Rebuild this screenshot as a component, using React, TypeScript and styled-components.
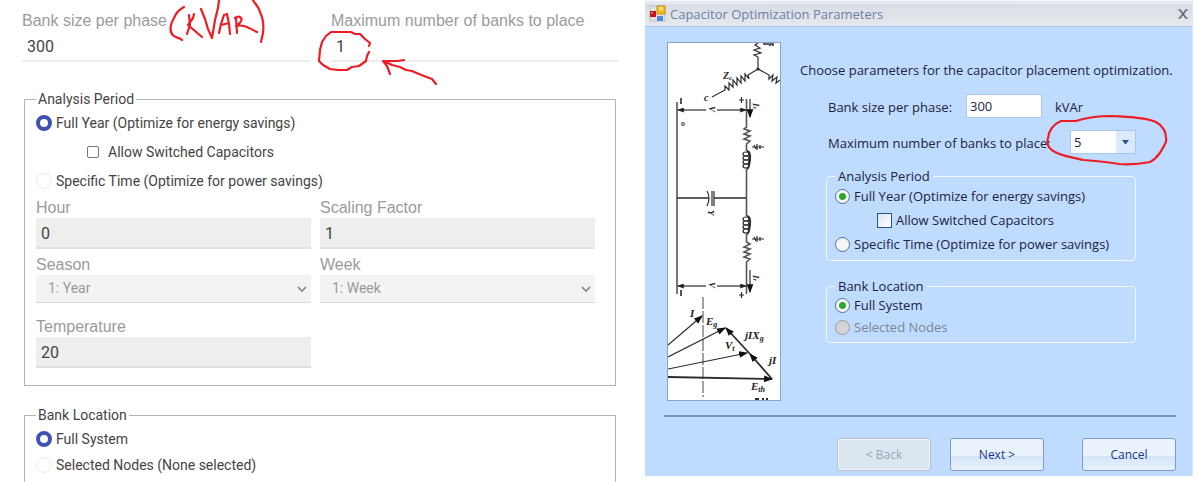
import React, { useId } from "react";
import styled, { createGlobalStyle } from "styled-components";

const GlobalStyle = createGlobalStyle`
  *, *::before, *::after { box-sizing: border-box; }
  body { margin: 0; background: #fff; }
  input, select, button { font: inherit; color: inherit; margin: 0; }
`;

const Page = styled.main`
  display: grid;
  grid-template-columns: minmax(0, 597fr) minmax(0, 548fr);
  align-items: start;
  gap: 26px;
  padding: 0 5px 0 22px;
  height: 100vh;
  overflow: hidden;
`;

/* ---------- web form ---------- */

const WebForm = styled.form`
  padding-top: 11px;
  font: 14px/20px Roboto, "Liberation Sans", sans-serif;
  color: #444;
`;

const TopFields = styled.div`
  display: grid;
  grid-template-columns: 1fr 1fr;
  gap: 21px;
  margin-bottom: 27px;
`;

const FieldGrid = styled.div`
  display: grid;
  grid-template-columns: 1fr 1fr;
  column-gap: 9px;
  row-gap: 6px;
  margin-top: 4px;
`;

const Field = styled.div<{ $spaced?: boolean }>`
  position: relative;
  display: flex;
  flex-direction: column;
  margin-top: ${(p) => (p.$spaced ? 8 : 0)}px;
`;

const FieldLabel = styled.label`
  font: 16px/20px "Liberation Sans", Arial, sans-serif;
  color: #9b9b9b;
`;

const TextInput = styled.input`
  width: 100%;
  height: 31px;
  padding: 2px 5px 0;
  border: 0;
  border-bottom: 2px solid #eee;
  border-radius: 0;
  background: transparent;
  font-size: 16px;
  color: #444;

  &:disabled {
    border-bottom-color: #e0e0e0;
    background: #eee;
  }
`;

const SelectBox = styled.div`
  display: grid;
  align-items: center;
  height: 28px;
  border-bottom: 1px solid #dcdcdc;
  background: #f3f3f3;

  & > * { grid-area: 1 / 1; }
  & > svg { justify-self: end; margin-right: 4px; pointer-events: none; }
`;

const FlatSelect = styled.select`
  appearance: none;
  width: 100%;
  height: 26px;
  padding: 0 12px 2px;
  border: 0;
  background: transparent;
  color: #999;
  opacity: 1;
`;

const Group = styled.fieldset`
  min-width: 0;
  margin: 0 3px 19px 2px;
  padding: 1px 20px 17px 11px;
  border: 1px solid #b4b4b4;

  & > legend { padding: 0 2px; }
`;

const Choice = styled.label<{ $nested?: boolean }>`
  display: flex;
  align-items: center;
  gap: ${(p) => (p.$nested ? 9 : 4)}px;
  height: ${(p) => (p.$nested ? 32 : 26)}px;
  padding-left: ${(p) => (p.$nested ? 51 : 0)}px;
`;

const WebRadio = styled.input.attrs({ type: "radio" })`
  appearance: none;
  width: 16px;
  height: 16px;
  border: 1px solid #ececec;
  border-radius: 50%;
  background: #fff;

  &:checked { border: 4px solid #3f51b5; }
`;

const WebCheck = styled.input.attrs({ type: "checkbox" })`
  appearance: none;
  width: 12px;
  height: 12px;
  border: 1px solid #777;
  border-radius: 2px;
  background: #fff;
`;

/* ---------- desktop dialog ---------- */

const Dialog = styled.section`
  padding-bottom: 5px;
  border-right: 1px solid #d6e9ff;
  background: #bfdbff;
  font: 13px/16px "Open Sans", "Noto Sans", sans-serif;
  color: #1c2340;
`;

const TitleBar = styled.header`
  display: flex;
  align-items: center;
  gap: 4px;
  height: 27px;
  padding: 0 3px 0 4px;
  border-top: 1px solid #f4fafa;
  border-bottom: 1px solid #a9c6ee;
  background: linear-gradient(#e4ebee 0 3px, #d8dde6 3px, #e6e9ec);
`;

const Title = styled.h1`
  flex: 1;
  margin: 0;
  font-size: 13px;
  font-weight: 400;
  color: #6b82a6;
`;

const CloseButton = styled.button`
  display: flex;
  padding: 0;
  border: 0;
  background: transparent;
`;

const DialogBody = styled.div`
  display: grid;
  grid-template-columns: 114px minmax(0, 1fr);
  gap: 19px;
  padding: 15px 16px 14px 22px;
`;

const Picture = styled.div`
  display: flex;
  border: 1px solid #86a3cc;
  background: #fff;
`;

const Parameters = styled.div`
  padding-top: 18px;
`;

const Intro = styled.p`
  margin: 0 0 14px;
  line-height: 20px;
  white-space: nowrap;
`;

const Row = styled.div`
  display: flex;
  align-items: center;
  height: 24px;
  margin-bottom: 12px;
  padding-left: 28px;
`;

const RowText = styled.span`
  padding-top: 2px;
`;

const RowLabel = styled.label<{ $width: number }>`
  width: ${(p) => p.$width}px;
  padding-top: 2px;
  white-space: nowrap;
`;

const SizeInput = styled.input`
  width: 76px;
  height: 24px;
  margin-right: 13px;
  padding: 0 3px;
  border: 1px solid #a9c7ec;
  background: #fff;
`;

const ComboBox = styled.div`
  position: relative;
  display: grid;
  align-items: center;
  width: 66px;
  height: 24px;
  border: 1px solid #a9c7ec;
  background: linear-gradient(to right, #fff 45px, #dbe9fc 45px);

  & > select, & > .arrow { grid-area: 1 / 1; }
  & > .arrow { justify-self: end; margin-right: 6px; pointer-events: none; }
`;

const ComboSelect = styled.select`
  appearance: none;
  width: 100%;
  height: 22px;
  padding: 0 3px;
  border: 0;
  background: transparent;
`;

const DialogGroup = styled.fieldset<{ $rowHeight: number }>`
  min-width: 0;
  margin: 14px 40px 17px 26px;
  padding: 0 8px 4px;
  border: 1px solid #f0f7ff;
  border-radius: 4px;

  & > legend { padding: 0 3px; }
  & > label { height: ${(p) => p.$rowHeight}px; }
`;

const DialogChoice = styled.label<{ $nested?: boolean; $muted?: boolean }>`
  display: flex;
  align-items: center;
  gap: 4px;
  padding-left: ${(p) => (p.$nested ? 42 : 0)}px;
  color: ${(p) => (p.$muted ? "#7d8694" : "inherit")};
`;

const DialogRadio = styled.input.attrs({ type: "radio" })`
  appearance: none;
  width: 15px;
  height: 15px;
  border: 1px solid #4f7398;
  border-radius: 50%;
  background: #f6f6f6;

  &:checked { background: radial-gradient(circle, #2aa82a 0 3px, #f6f6f6 4px); }
  &:disabled { border-color: #9b9b9b; background: #d4d4d4; }
`;

const DialogCheck = styled.input.attrs({ type: "checkbox" })`
  appearance: none;
  width: 15px;
  height: 15px;
  border: 1px solid #1f568c;
  background: linear-gradient(135deg, #dfe3ec, #fff);
`;

const Divider = styled.hr`
  height: 2px;
  margin: 0 16px 21px 19px;
  border: 0;
  background: #7795c0;
`;

const Footer = styled.footer`
  display: flex;
  justify-content: flex-end;
  gap: 19px;
  padding-right: 16px;
`;

const DialogButton = styled.button<{ $apart?: boolean }>`
  width: 94px;
  height: 33px;
  margin-left: ${(p) => (p.$apart ? 19 : 0)}px;
  padding: 0;
  border: 1px solid #7f9cc4;
  border-radius: 3px;
  background: linear-gradient(#eaf2fd 0 55%, #d5e4f8 55%, #e8f1fd);
  font-size: 12px;
  color: #17398a;

  &:disabled {
    border-color: #b9c0c8;
    background: #dce6f0;
    box-shadow: inset 0 0 0 1px #f0f4f8;
    color: #9aa6b4;
  }
`;

/* ---------- red pen notes ---------- */

const Ink = styled.svg<{ $left: number; $top: number }>`
  position: absolute;
  left: ${(p) => p.$left}px;
  top: ${(p) => p.$top}px;
  fill: none;
  stroke: #ee1c24;
  stroke-width: 2.2;
  stroke-linecap: round;
  stroke-linejoin: round;
  pointer-events: none;
`;

const UnitNote = () => (
  <Ink $left={143} $top={-11} width="105" height="46" viewBox="165 0 105 46" role="img" aria-label="Handwritten unit note">
    <path d="M184 7C180 9 176 13 174 18C171 23 169 30 172 34C174 38 179 37 182 40" />
    <path d="M189 15L190 25L187 34M194 14L193 18L188 25L195 31L202 37" />
    <path d="M201 9L205 19L208 29L212 38L215 20L218 8L219 0" />
    <path d="M219 33L221 24L224 15L227 14L229 24L230 34M221 25L229 23" />
    <path d="M236 18L237 33M235 18C239 15 243 18 241 21C240 24 237 25 236 26C243 24 249 28 257 32" />
    <path d="M253 0C255 4 259 7 260 12C263 18 264 25 263 33L261 42" />
  </Ink>
);

const LimitNote = () => (
  <Ink $left={-17} $top={17} width="126" height="62" viewBox="314 28 126 62" role="img" aria-label="Circled value with arrow">
    <path d="M369 46L370 43L365 39L360 34L355 34L351 32L331 32L326 36L322 42L320 50L319 61L323 65L330 69L338 70L347 70L352 67L359 66L366 61L367 56L369 52" />
    <path d="M436 84L432 79L424 76L419 74L412 71L406 70L400 67L392 65L384 61M404 60L398 61L383 61L387 66L390 74" />
  </Ink>
);

const ComboNote = () => (
  <Ink $left={-25} $top={-17} width="122" height="54" viewBox="1046 114 122 54" role="img" aria-label="Circled value">
    <path d="M1076 121H1061C1054 124 1049 130 1048 138C1046 145 1049 149 1055 152C1062 156 1074 158 1084 160C1096 161 1108 162 1119 164C1131 165 1140 164 1150 162C1158 158 1162 150 1166 142C1167 133 1163 126 1156 122C1144 117 1128 117 1112 116C1099 116 1088 117 1076 121" />
  </Ink>
);

/* ---------- drawings ---------- */

const Chevron = () => (
  <svg width="10" height="8" viewBox="0 0 10 8" fill="none" stroke="#858585" strokeWidth="1.6" aria-hidden="true">
    <path d="M1 2L5 6L9 2" />
  </svg>
);

const AppIcon = () => (
  <svg width="17" height="17" viewBox="0 0 17 17" aria-hidden="true">
    <rect x="1" y="1" width="15" height="15" fill="#dfe1e2" stroke="#bfc3c6" />
    <rect x="1" y="6" width="6" height="6" fill="#c3161c" />
    <rect x="2" y="7" width="2" height="2" fill="#ec6a5e" />
    <rect x="8" y="1" width="8" height="8" fill="#f4b921" stroke="#cf9415" />
    <rect x="10" y="2" width="4" height="3" fill="#ffe27c" />
    <rect x="8" y="11" width="6" height="5" fill="#4f87dd" />
  </svg>
);

const Coil = ({ y }: { y: number }) => (
  <g>
    {[0, 4, 8, 12].map((d) => (
      <ellipse key={d} cx="78" cy={y + 2 + d} rx="3" ry="2" />
    ))}
    <path d={`M79 ${y - 1}Q83 ${y} 82 ${y + 8}T79 ${y + 17}`} strokeWidth="2" />
  </g>
);

const CircuitDrawing = () => (
  <svg width="112" height="357" viewBox="0 0 112 357" fill="none" stroke="#2c2c2c" strokeWidth="1.2" role="img" aria-label="Capacitor circuit and phasor diagram">
    <defs>
      <marker id="tip" viewBox="0 0 8 6" refX="7" refY="3" markerWidth="7" markerHeight="5" markerUnits="userSpaceOnUse" orient="auto-start-reverse">
        <path d="M0 0L8 3L0 6Z" fill="#222" stroke="none" />
      </marker>
      <marker id="bigTip" viewBox="0 0 8 6" refX="7" refY="3" markerWidth="9" markerHeight="7" markerUnits="userSpaceOnUse" orient="auto">
        <path d="M0 0L8 3L0 6Z" fill="#111" stroke="none" />
      </marker>
    </defs>

    <path d="M90 26V14L86 12L93 10L86 7L92 5L87 2L90 0" />
    <path d="M90 26L80 32L81 36L77 31L77 38L73 33L73 40L69 35L69 42L65 37L65 44L61 40L61 47L57 43L57 47L44 54" />
    <path d="M90 26L101 32L101 36L105 32L104 38L109 34L108 40L112 37" />
    <circle cx="90" cy="26" r="1" fill="#222" />
    <path d="M95 1H101M102 3V1H105V3" strokeWidth="1.6" />

    <g stroke="#555" strokeWidth="1.6">
      <path d="M9 59V251" />
      <path d="M78.5 56V84L76 86L82 88L76 91L82 93L76 96L82 98L78.5 101V108M78.5 126V173M78.5 191V199L82 201L76 204L82 206L76 209L82 211L76 214L82 216L78.5 219V251" />
    </g>
    <path d="M9 155H41M46 155H78" strokeWidth="1.5" />
    <path d="M39 148Q43 155 39 163M44 148V163M46 148V163" />
    <path d="M13 55V61M13 247V253" strokeWidth="1.6" />
    <Coil y={109} />
    <Coil y={174} />

    <path d="M38 67H10" markerEnd="url(#tip)" />
    <path d="M49 67H78" markerEnd="url(#tip)" />
    <path d="M38 243H10" markerEnd="url(#tip)" />
    <path d="M49 243H78" markerEnd="url(#tip)" />
    <path d="M82 56V74" markerEnd="url(#bigTip)" />
    <path d="M82 227V249" markerEnd="url(#bigTip)" />
    <path d="M71 57H76M73.5 54V60M71 252H76M73.5 249V255" />
    <path d="M84 104H96M89 101V107M92 102V106M84 196H96M89 193V199M92 194V198" />
    <path d="M86 102L88 106M86 194L88 198" />

    <path d="M35 254V354" stroke="#666" strokeDasharray="12 2" />
    <path d="M0 302L34 273" markerEnd="url(#bigTip)" />
    <path d="M0 314L57 285" markerEnd="url(#bigTip)" />
    <path d="M0 326L79 310" markerEnd="url(#bigTip)" />
    <path d="M0 334L104 336" strokeWidth="1.8" markerEnd="url(#bigTip)" />
    <path d="M104 336L82 311" strokeWidth="1.8" markerEnd="url(#bigTip)" />
    <path d="M82 311L58 285" strokeWidth="1.8" markerEnd="url(#bigTip)" />

    <g fill="#222" stroke="none" fontFamily="'Liberation Serif', serif" fontStyle="italic" fontWeight="700" fontSize="10">
      <text x="55" y="36">Z<tspan fontSize="7" dy="1">c</tspan></text>
      <text x="36" y="58">c</text>
      <text transform="translate(41 63) rotate(90)" fontSize="9">V</text>
      <text transform="translate(85 60) rotate(90)" fontSize="9">I<tspan fontSize="6">s</tspan></text>
      <text transform="translate(13 79) rotate(90)" fontSize="8">o</text>
      <text transform="translate(40 167) rotate(90)" fontSize="9">Y</text>
      <text transform="translate(41 239) rotate(90)" fontSize="9">V</text>
      <text transform="translate(85 232) rotate(90)" fontSize="9">I<tspan fontSize="6">r</tspan></text>
      <g fontSize="11">
        <text x="22" y="274">I</text>
        <text x="38" y="282">E<tspan fontSize="8" dy="2">g</tspan></text>
        <text x="77" y="296">jIX<tspan fontSize="8" dy="2">g</tspan></text>
        <text x="57" y="306">V<tspan fontSize="8" dy="2">t</tspan></text>
        <text x="101" y="321">jI</text>
        <text x="83" y="347">E<tspan fontSize="8" dy="2">th</tspan></text>
      </g>
    </g>
    <path d="M87 356H91M94 356H96M98 356H100" strokeWidth="2" />
  </svg>
);

/* ---------- composed parts ---------- */

type TextFieldProps = {
  label: string;
  value: string;
  disabled?: boolean;
  spaced?: boolean;
  children?: React.ReactNode;
};

const TextField = ({ label, value, disabled, spaced, children }: TextFieldProps) => {
  const id = useId();
  return (
    <Field $spaced={spaced}>
      <FieldLabel htmlFor={id}>{label}</FieldLabel>
      <TextInput id={id} defaultValue={value} disabled={disabled} />
      {children}
    </Field>
  );
};

const SelectField = ({ label, value }: { label: string; value: string }) => {
  const id = useId();
  return (
    <Field>
      <FieldLabel htmlFor={id}>{label}</FieldLabel>
      <SelectBox>
        <FlatSelect id={id} disabled defaultValue={value}>
          <option>{value}</option>
        </FlatSelect>
        <Chevron />
      </SelectBox>
    </Field>
  );
};

export default function App() {
  return (
    <>
      <GlobalStyle />
      <Page>
        <WebForm>
          <TopFields>
            <TextField label="Bank size per phase" value="300">
              <UnitNote />
            </TextField>
            <TextField label="Maximum number of banks to place" value="1">
              <LimitNote />
            </TextField>
          </TopFields>

          <Group>
            <legend>Analysis Period</legend>
            <Choice><WebRadio name="period" defaultChecked />Full Year (Optimize for energy savings)</Choice>
            <Choice $nested><WebCheck />Allow Switched Capacitors</Choice>
            <Choice><WebRadio name="period" />Specific Time (Optimize for power savings)</Choice>
            <FieldGrid>
              <TextField label="Hour" value="0" disabled />
              <TextField label="Scaling Factor" value="1" disabled />
              <SelectField label="Season" value="1: Year" />
              <SelectField label="Week" value="1: Week" />
              <TextField label="Temperature" value="20" disabled spaced />
            </FieldGrid>
          </Group>

          <Group>
            <legend>Bank Location</legend>
            <Choice><WebRadio name="location" defaultChecked />Full System</Choice>
            <Choice><WebRadio name="location" />Selected Nodes (None selected)</Choice>
          </Group>
        </WebForm>

        <Dialog>
          <TitleBar>
            <AppIcon />
            <Title>Capacitor Optimization Parameters</Title>
            <CloseButton type="button" aria-label="Close">
              <svg width="12" height="10" viewBox="0 0 12 10" stroke="#5f6b7a" strokeWidth="1.6" aria-hidden="true">
                <path d="M3 1L9 9M9 1L3 9" />
                <path d="M1 1H4M8 1H11M1 9H4M8 9H11" strokeWidth="1" />
              </svg>
            </CloseButton>
          </TitleBar>

          <DialogBody>
            <Picture><CircuitDrawing /></Picture>
            <Parameters>
              <Intro>Choose parameters for the capacitor placement optimization.</Intro>
              <Row>
                <RowLabel $width={138} htmlFor="bank-size">Bank size per phase:</RowLabel>
                <SizeInput id="bank-size" defaultValue="300" />
                <RowText>kVAr</RowText>
              </Row>
              <Row>
                <RowLabel $width={242} htmlFor="bank-limit">Maximum number of banks to place:</RowLabel>
                <ComboBox>
                  <ComboSelect id="bank-limit" defaultValue="5">
                    <option>5</option>
                  </ComboSelect>
                  <svg className="arrow" width="7" height="4" viewBox="0 0 7 4" aria-hidden="true">
                    <path d="M0 0H7L4 4H3Z" fill="#27548f" />
                  </svg>
                  <ComboNote />
                </ComboBox>
              </Row>
              <DialogGroup $rowHeight={24}>
                <legend>Analysis Period</legend>
                <DialogChoice><DialogRadio name="dialog-period" defaultChecked />Full Year (Optimize for energy savings)</DialogChoice>
                <DialogChoice $nested><DialogCheck />Allow Switched Capacitors</DialogChoice>
                <DialogChoice><DialogRadio name="dialog-period" />Specific Time (Optimize for power savings)</DialogChoice>
              </DialogGroup>
              <DialogGroup $rowHeight={22}>
                <legend>Bank Location</legend>
                <DialogChoice><DialogRadio name="dialog-location" defaultChecked />Full System</DialogChoice>
                <DialogChoice $muted><DialogRadio name="dialog-location" disabled />Selected Nodes</DialogChoice>
              </DialogGroup>
            </Parameters>
          </DialogBody>

          <Divider />
          <Footer>
            <DialogButton type="button" disabled>&lt; Back</DialogButton>
            <DialogButton type="button">Next &gt;</DialogButton>
            <DialogButton type="button" $apart>Cancel</DialogButton>
          </Footer>
        </Dialog>
      </Page>
    </>
  );
}
